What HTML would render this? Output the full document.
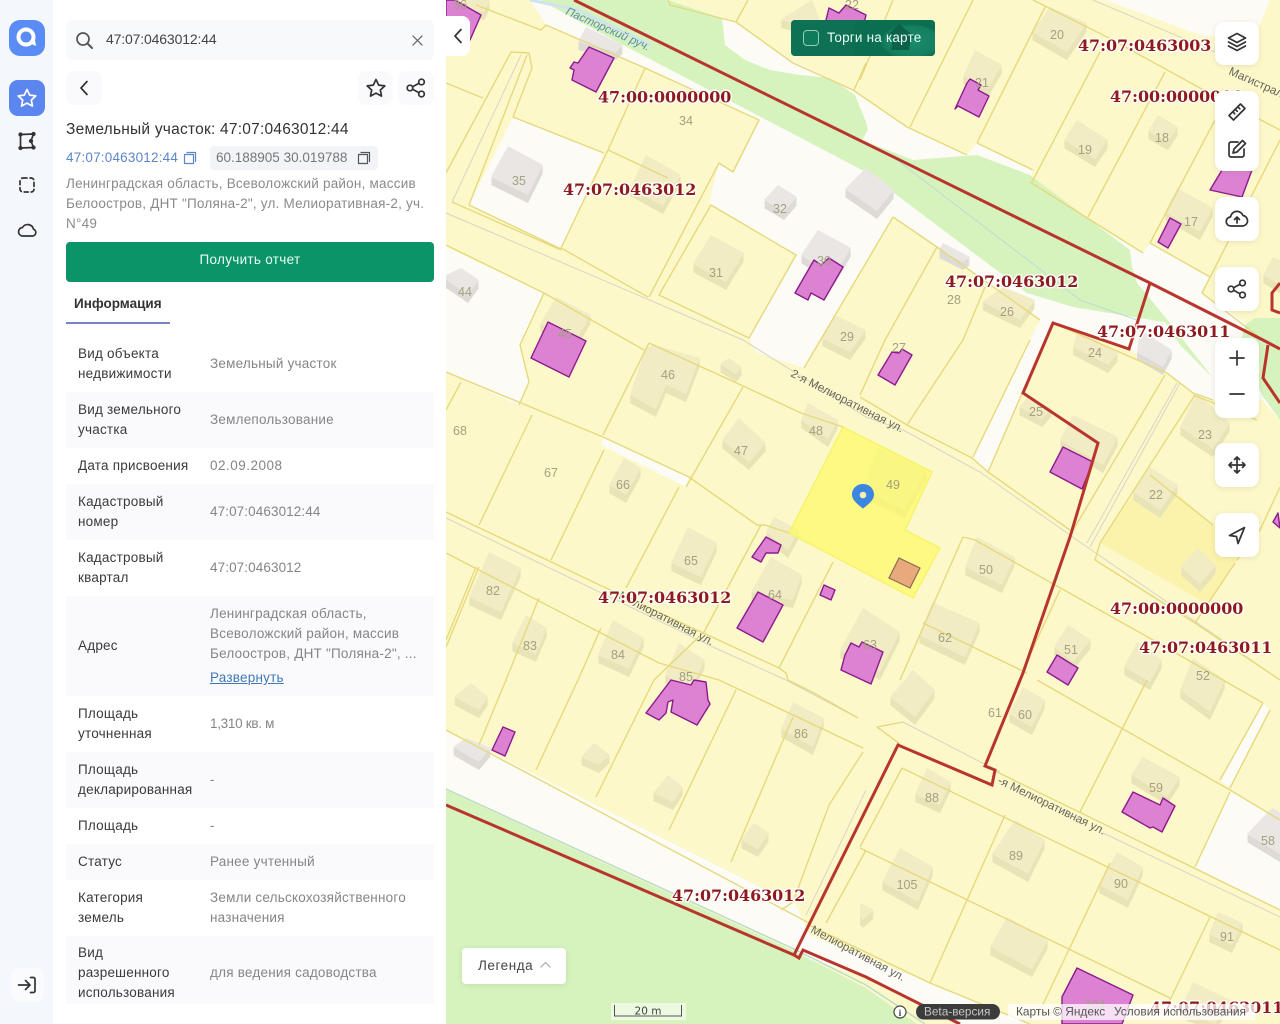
<!DOCTYPE html>
<html lang="ru"><head><meta charset="utf-8"><title>Земельный участок</title>
<style>
*{box-sizing:border-box}
html,body{margin:0;padding:0;width:1280px;height:1024px;overflow:hidden;background:#fff;font-family:"Liberation Sans","DejaVu Sans",sans-serif}
.a{position:absolute}
#map{position:absolute;left:0;top:0}
#nav{left:0;top:0;width:53px;height:1024px;background:#f4f8fc}
#panel{left:54px;top:0;width:392px;height:1024px;background:#fff}
.row{position:absolute;left:66px;width:368px;font-size:13.5px;line-height:20px;letter-spacing:.22px}
.row.alt{background:#fafafd}
.lb{position:absolute;left:12px;top:50%;transform:translateY(-50%);color:#3a3a3a;width:125px;white-space:nowrap}
.vl{position:absolute;left:144px;top:50%;transform:translateY(-50%);color:#858585;width:220px;white-space:nowrap}
.btn{position:absolute;background:#fff;border-radius:9px;box-shadow:0 1px 6px rgba(90,90,60,.14)}
.ic{position:absolute;fill:none;stroke:#333;stroke-width:1.7;stroke-linecap:round;stroke-linejoin:round}
.sq{position:absolute;background:#fafafc;border-radius:8px}
.t{font-family:"DejaVu Serif","Liberation Serif",serif;font-weight:bold;font-size:15.9px;fill:#8e1a1f;paint-order:stroke;stroke:#fff;stroke-opacity:.85;stroke-width:3px;stroke-linejoin:round}
.n{font-family:"Liberation Sans",sans-serif;font-size:12.5px;fill:#a3a17f;text-anchor:middle}
.s{font-family:"Liberation Sans",sans-serif;font-size:11.7px;fill:#66665c}
</style></head><body>
<svg id="map" width="1280" height="1024" viewBox="0 0 1280 1024">
<defs>
<g id="by">
<polygon points="646,155 681,175 663,206 630,188"/><polygon points="711,235 744,253 726,282 693,264"/><polygon points="556,297 591,315 575,342 540,324"/><polygon points="835,315 866,330 850,352 822,338"/><polygon points="1050,7 1087,23 1067,52 1032,32"/><polygon points="1077,120 1108,140 1095,159 1064,140"/><polygon points="1158,115 1178,127 1168,142 1148,131"/><polygon points="975,50 1002,65 988,89 963,76"/><polygon points="1177,188 1213,208 1200,232 1165,212"/><polygon points="1003,287 1035,300 1020,320 982,302"/><polygon points="655,345 700,358 686,394 666,385 656,409 630,395 646,347"/><polygon points="729,358 742,367 736,374 720,364"/><polygon points="739,418 766,443 749,462 722,440"/><polygon points="808,403 838,420 828,439 801,420"/><polygon points="624,458 641,468 626,495 609,485"/><polygon points="688,527 717,543 701,577 671,563"/><polygon points="771,557 802,575 793,600 751,592"/><polygon points="489,552 521,568 501,612 469,597"/><polygon points="526,615 547,628 536,654 512,643"/><polygon points="613,620 644,638 629,669 598,655"/><polygon points="679,643 705,660 690,690 665,675"/><polygon points="774,517 799,530 788,550 766,532"/><polygon points="863,608 900,632 880,672 840,650"/><polygon points="932,602 980,623 965,657 919,635"/><polygon points="977,537 1015,557 1002,585 965,567"/><polygon points="877,447 927,470 905,510 863,490"/><polygon points="1028,397 1052,408 1042,419 1019,407"/><polygon points="1078,330 1118,353 1108,365 1073,347"/><polygon points="1073,415 1118,437 1103,465 1060,440"/><polygon points="1197,393 1230,423 1213,449 1180,427"/><polygon points="1150,467 1178,485 1160,510 1133,492"/><polygon points="1197,548 1216,565 1200,584 1181,567"/><polygon points="1068,625 1091,640 1073,662 1054,647"/><polygon points="1193,658 1225,680 1210,712 1180,690"/><polygon points="1137,642 1162,660 1150,682 1124,667"/><polygon points="1023,687 1045,700 1032,727 1009,714"/><polygon points="793,702 824,718 813,747 781,729"/><polygon points="454,697 471,683 488,697 479,710"/><polygon points="581,757 594,743 610,755 599,765"/><polygon points="653,793 668,775 683,787 673,802"/><polygon points="741,840 754,823 769,833 758,849"/><polygon points="927,768 951,782 940,805 915,794"/><polygon points="1015,820 1045,840 1028,874 992,854"/><polygon points="900,848 933,867 918,902 882,882"/><polygon points="1117,852 1143,867 1128,900 1099,885"/><polygon points="1218,912 1243,923 1232,945 1209,934"/><polygon points="1007,917 1048,940 1032,969 990,947"/><polygon points="860,903 874,910 863,920 860,917"/><polygon points="1143,757 1180,777 1167,797 1131,775"/><polygon points="913,670 935,690 915,717 890,697"/><polygon points="1193,982 1230,1000 1215,1024 1180,1010"/><polygon points="465,0 490,0 484,12 470,10"/><polygon points="780,20 812,0 820,20 803,25"/><polygon points="1273,257 1280,260 1280,285 1263,275"/>
</g>
<g id="bg">
<polygon points="508,146 543,165 528,195 491,177"/><polygon points="586,27 623,45 616,52 578,42"/><polygon points="778,185 797,197 784,212 764,200"/><polygon points="818,230 851,248 834,277 801,255"/><polygon points="866,168 894,190 877,211 845,189"/><polygon points="461,268 479,280 468,295 446,280 446,275"/><polygon points="943,243 970,257 963,262 939,250"/><polygon points="1140,330 1172,350 1163,367 1137,352"/><polygon points="1272,808 1280,812 1280,854 1247,834"/><polygon points="466,738 491,748 479,762 453,747"/>
</g>
<radialGradient id="gl" cx="0.62" cy="0.6" r="0.5"><stop offset="0" stop-color="#1b8b6c"/><stop offset="0.85" stop-color="#157e60"/><stop offset="1" stop-color="#0b6e50"/></radialGradient>
</defs>
<rect x="446" width="834" height="1024" fill="#fdf8ca"/>
<!-- white areas -->
<g fill="#fcfbf6">
<polygon points="530,0 668,0 736,22 791,60 853,90 907,127 967,155 977,143 1033,170 1030,182 1143,253 1150,243 1210,277 1202,293 1267,337 1280,345 1280,420 1262,400 1213,400 1193,393 1167,373 1130,350 1053,323 1043,345 988,472 973,457 1030,340 1040,320 937,247 893,217 804,368 756,352 749,338 796,255 709,203 719,163 733,172 759,120 645,68 546,25"/>
<polygon points="469,205 513,117 604,153 561,250"/>
<polygon points="446,247 544,293 520,345 529,382 519,405 446,372"/>
<polygon points="603,437 689,477 686,487 601,445"/>
<polygon points="446,730 796,905 810,935 930,983 1030,1024 960,1024 860,975 800,957 796,950 446,788"/>
<polygon points="1232,790 1195,867 1280,910 1280,820"/>
<polygon points="1263,703 1270,710 1230,788 1220,780"/>
<polygon points="1105,0 1270,0 1253,40 1200,35"/>
</g>
<polygon points="1100,543 1150,470 1213,525 1260,530 1237,560 1207,604" fill="#fbf3ab"/>
<!-- green -->
<g fill="#d6f3bd">
<polygon points="540,0 668,0 722,18 725,45 745,60 770,70 800,75 830,78 855,95 866,122 868,130 862,140 913,160 977,155 1030,175 1130,250 1132,267 1137,283 1170,323 1073,307 1027,293 866,172 623,45"/>
<polygon points="1177,340 1150,300 1137,283 1170,323 1213,378 1180,345"/>
<polygon points="1245,325 1255,318 1280,318 1280,420 1262,395 1240,345"/>
<polygon points="446,790 796,952 866,988 917,1024 446,1024"/>
</g>
<polyline points="893,157 1037,267 1080,300 1137,320" fill="none" stroke="#bcdcd4" stroke-width="1"/>
<polyline points="446,789 796,950 866,985 925,1024" fill="none" stroke="#b9dccb" stroke-width="1.5"/>
<polyline points="530,0 578,10 650,45" fill="none" stroke="#cfe3ee" stroke-width="3"/>
<!-- buildings -->
<g fill="#e9e3b8"><use href="#by" y="2"/><use href="#by" y="4"/><use href="#by" y="6"/><use href="#by" y="8"/></g>
<use href="#by" fill="#f1ecc4"/>
<g fill="#dedbd7"><use href="#bg" y="2"/><use href="#bg" y="4"/><use href="#bg" y="6"/><use href="#bg" y="8"/></g>
<use href="#bg" fill="#e9e6e3"/>
<!-- selected -->
<polygon points="843,427 932,472 905,530 940,548 913,598 789,533" fill="#fdfa68" fill-opacity=".72" stroke="#f7f36c" stroke-width="1.5"/>
<!-- thin roads -->
<g fill="none" stroke="#d8d5c4" stroke-width="1">
<polyline points="446,213 743,340 866,417 903,430 980,472 1077,540 1193,620 1280,680"/>
<polyline points="446,518 616,600 713,647 786,680 858,718"/>
<polyline points="1177,383 1087,543"/><polyline points="1180,383 1090,547"/>
<polyline points="866,790 806,915"/>
<polyline points="1103,833 1280,917"/>
<polyline points="1093,0 1227,57"/><polyline points="903,722 1000,772"/>
<polyline points="521,55 452,202"/>
</g>
<!-- yellow lines -->
<g fill="none" stroke="#e6d97c" stroke-width="1.4" stroke-linejoin="round">
<polyline points="476,5 541,30 546,25 645,68 759,120 733,172 719,163 649,297"/>
<polyline points="511,52 529,53 532,68 513,117 604,153"/>
<polyline points="645,68 608,150 561,248 648,297"/>
<polyline points="608,150 668,178"/><polyline points="446,83 483,98"/>
<polyline points="511,52 446,173"/><polyline points="527,55 469,205 561,249"/><polyline points="452,202 561,250"/>
<polygon points="711,205 796,255 749,338 659,295"/>
<polyline points="446,245 544,293 644,350"/>
<polyline points="544,293 520,345 529,382 519,405"/>
<polyline points="649,343 741,385 801,413 843,427"/>
<polyline points="649,343 603,435"/>
<polyline points="446,372 603,437 689,477 757,525 765,525 789,533"/>
<polyline points="743,387 686,487"/>
<polyline points="532,415 479,525"/><polyline points="604,450 551,560"/><polyline points="679,487 626,588"/><polyline points="461,382 446,410"/>
<polyline points="446,512 606,588 779,668 786,673 788,680 814,693 858,718"/>
<polyline points="446,553 659,663 719,680 863,748"/>
<polyline points="761,525 704,632"/><polyline points="833,562 779,668"/>
<polyline points="539,598 506,680 479,745"/><polyline points="601,628 578,680 536,770"/>
<polyline points="479,567 446,647"/><polyline points="476,567 446,640"/>
<polyline points="654,680 596,797"/><polyline points="704,632 654,680"/><polyline points="736,690 669,830"/><polyline points="793,717 731,862"/>
<polyline points="863,752 829,805 793,902 781,910"/>
<polyline points="446,730 809,923"/>
<polyline points="866,850 826,923"/>
<polyline points="937,247 885,340 860,395"/><polyline points="893,217 804,368"/>
<polyline points="937,247 1040,320"/><polyline points="893,217 937,247"/>
<polyline points="985,287 963,340 907,425"/>
<polyline points="860,397 907,425 972,458 988,472 1070,530"/>
<polyline points="988,472 1043,345"/><polyline points="973,457 1030,340"/>
<polyline points="1165,375 1072,532"/>
<polyline points="1053,323 1167,373 1193,393 1213,400"/>
<polyline points="1195,395 1100,543 1095,560 1195,623 1235,563"/>
<polyline points="1150,475 1213,525"/>
<polyline points="1280,487 1260,530 1237,560"/><polyline points="1193,395 1257,420"/>
<polyline points="963,537 900,680"/>
<polyline points="963,537 975,540 1153,640 1223,680 1263,703"/>
<polyline points="1060,590 1023,670"/><polyline points="923,623 1027,673"/>
<polyline points="1195,623 1280,680"/>
<polyline points="1037,680 1230,790 1280,820"/><polyline points="1147,680 1080,812"/>
<polyline points="1230,792 1195,867"/><polyline points="1263,703 1220,780"/><polyline points="1270,710 1230,788"/>
<polyline points="993,770 1280,910"/>
<polyline points="903,722 877,727 900,744"/>
<polyline points="902,768 1280,950"/><polyline points="902,768 860,847"/>
<polyline points="860,848 1170,998"/>
<polyline points="1005,815 930,983"/><polyline points="1110,863 1037,1017"/><polyline points="1210,917 1170,1000"/>
<polyline points="809,925 930,983 1030,1024"/>
<polyline points="973,0 910,127"/><polyline points="893,0 860,80"/><polyline points="1045,7 977,143"/>
<polyline points="1033,0 1107,37 1200,88 1280,130"/>
<polyline points="1100,52 1032,182"/><polyline points="1165,72 1088,217"/><polyline points="1215,120 1150,243"/><polyline points="1280,140 1202,293"/>
<polyline points="1030,182 1143,253"/><polyline points="1150,243 1210,277"/><polyline points="1202,293 1263,340"/>
<polyline points="668,0 670,5 736,22 793,63 853,90 907,127 967,155"/><polyline points="977,143 1033,170"/><polyline points="736,22 748,0"/><polyline points="854,90 866,63"/>
</g>
<!-- pink -->
<g fill="#dd82d2" stroke="#8c1a8c" stroke-width="1.4" stroke-linejoin="round">
<polygon points="446,0 455,0 481,15 470,40 446,40"/>
<polygon points="589,47 614,58 596,92 572,80 574,70 570,68 574,62 578,63"/>
<polygon points="826,20 829,8 839,13 846,5 866,15 860,40 830,30"/>
<polygon points="970,79 981,85 978,90 989,96 979,117 958,106 955,109 967,83"/>
<polygon points="814,260 821,265 829,258 843,267 824,300 811,293 808,300 795,293"/>
<polygon points="548,322 586,341 569,377 531,358"/>
<polygon points="892,352 899,353 902,349 912,355 895,385 878,375"/>
<polygon points="1063,447 1093,462 1082,489 1050,472"/>
<polygon points="1225,165 1252,170 1242,197 1210,190"/>
<polygon points="1170,218 1181,224 1168,248 1158,242"/>
<polygon points="766,537 781,545 778,553 766,553 761,562 752,557"/>
<polygon points="824,585 835,590 831,600 820,595"/>
<polygon points="758,592 783,605 763,642 737,628"/>
<polygon points="851,643 859,647 862,642 883,652 871,684 841,670 845,655"/>
<polygon points="671,680 691,685 694,680 706,682 708,700 710,704 697,725 671,712 673,700 668,702 666,713 659,720 646,713"/>
<polygon points="503,727 515,732 505,756 492,750"/>
<polygon points="1057,655 1078,668 1068,685 1047,672"/>
<polygon points="1133,792 1160,805 1163,798 1175,806 1162,832 1153,827 1150,828 1122,812"/>
<polygon points="1077,968 1133,995 1122,1024 1062,1024 1062,997"/>
<polygon points="1278,513 1273,522 1280,528"/>
</g>
<polygon points="899,558 920,568 910,588 889,578" fill="#e8a97c" stroke="#8a6a50" stroke-width="1.2"/>
<!-- red -->
<g fill="none" stroke="#b8352e" stroke-width="3" stroke-linejoin="miter">
<polyline points="574,0 1150,283 1263,340 1280,349"/>
<polyline points="1150,283 1129,349 1053,323 1023,393 1098,443 1070,537 1023,673 985,766 995,770 992,785 898,745 794,955 799,958 803,950 866,977 960,1024"/>
<polyline points="446,805 794,955"/>
<polyline points="1280,283 1272,293 1272,310 1280,313"/>
<polyline points="1268,345 1263,378 1280,403"/>
</g>
<!-- numbers -->
<g class="n">
<text x="460" y="9">36</text><text x="852" y="9">22</text><text x="686" y="125">34</text><text x="519" y="185">35</text><text x="780" y="213">32</text><text x="824" y="265">30</text><text x="716" y="277">31</text><text x="465" y="296">44</text><text x="565" y="338">45</text><text x="847" y="341">29</text><text x="1057" y="39">20</text><text x="982" y="87">21</text><text x="1085" y="154">19</text><text x="1162" y="142">18</text><text x="1191" y="226">17</text><text x="954" y="304">28</text><text x="1007" y="316">26</text><text x="1095" y="357">24</text><text x="899" y="352">27</text><text x="1036" y="416">25</text><text x="668" y="379">46</text><text x="816" y="435">48</text><text x="741" y="455">47</text><text x="460" y="435">68</text><text x="551" y="477">67</text><text x="623" y="489">66</text><text x="691" y="565">65</text><text x="775" y="599">64</text><text x="493" y="595">82</text><text x="530" y="650">83</text><text x="618" y="659">84</text><text x="686" y="681">85</text><text x="801" y="738">86</text><text x="893" y="489">49</text><text x="986" y="574">50</text><text x="945" y="642">62</text><text x="870" y="649">63</text><text x="1205" y="439">23</text><text x="1156" y="499">22</text><text x="1071" y="654">51</text><text x="1203" y="680">52</text><text x="1025" y="719">60</text><text x="995" y="717">61</text><text x="1156" y="792">59</text><text x="1268" y="845">58</text><text x="932" y="802">88</text><text x="1016" y="860">89</text><text x="907" y="889">105</text><text x="1121" y="888">90</text><text x="1227" y="941">91</text><text x="1095" y="1009">104</text>
</g>
<!-- street names -->
<text class="s" transform="translate(565,14) rotate(24)" style="font-style:italic;fill:#5d8cab;font-size:11.5px">Пасторский руч.</text>
<text class="s" transform="translate(790,376) rotate(27)">2-я Мелиоративная ул.</text>
<text class="s" transform="translate(618,598) rotate(27)">Мелиоративная ул.</text>
<text class="s" transform="translate(997,783) rotate(26)">-я Мелиоративная ул.</text>
<text class="s" transform="translate(810,932) rotate(28)">Мелиоративная ул.</text>
<text class="s" transform="translate(1228,74) rotate(24)">Магистральная</text>
<!-- cadastral labels -->
<text class="t" x="598" y="102.5">47:00:0000000</text>
<text class="t" x="563" y="195">47:07:0463012</text>
<text class="t" x="1078" y="51">47:07:0463003</text>
<text class="t" x="1110" y="102">47:00:0000000</text>
<text class="t" x="945" y="287">47:07:0463012</text>
<text class="t" x="1097" y="337">47:07:0463011</text>
<text class="t" x="598" y="603">47:07:0463012</text>
<text class="t" x="1110" y="614">47:00:0000000</text>
<text class="t" x="1139" y="653">47:07:0463011</text>
<text class="t" x="672" y="901">47:07:0463012</text>
<text class="t" x="1150" y="1013">47:07:0463011</text>
<!-- pin -->
<path d="M863 484c-6.500 0-11 4.800-11 10.600 0 6 6.500 10 11 14 4.500-4 11-8 11-14 0-5.800-4.500-10.600-11-10.600z" fill="#3c85e0"/>
<circle cx="863" cy="495" r="3.300" fill="#f3efb0"/>
<!-- scale -->
<rect x="611" y="1003" width="75" height="17" fill="#fff" fill-opacity=".55"/>
<path d="M614.500 1005v11h67v-11" fill="none" stroke="#555" stroke-width="1"/>
<text x="648" y="1014.500" font-size="10.500" fill="#444" text-anchor="middle" font-family="DejaVu Sans,sans-serif">20 m</text>
<!-- attribution -->
<circle cx="900" cy="1012" r="6" fill="#fff" stroke="#444" stroke-width="1.200"/>
<text x="900" y="1016" font-size="9.500" font-weight="bold" fill="#444" text-anchor="middle" font-family="Liberation Serif,serif">i</text>
<rect x="916" y="1004" width="84" height="15.500" rx="7.700" fill="#3c3c3c"/>
<text x="924" y="1015.500" font-size="11.800" fill="#c8c8c8">Beta-версия</text>
<rect x="1008" y="1004" width="247" height="16" fill="#fff" fill-opacity=".75"/>
<text x="1016" y="1015.500" font-size="11.900" fill="#555">Карты © Яндекс</text>
<text x="1114" y="1015.500" font-size="11.900" fill="#555">Условия использования</text>
</svg>

<div class="a" id="nav"></div>
<div class="a" id="panel"></div>
<!-- nav -->
<svg class="a" style="left:9px;top:20px" width="36" height="36" viewBox="0 0 36 36"><rect width="36" height="36" rx="11" fill="#5b8cf5"/><circle cx="17" cy="17" r="7.500" fill="none" stroke="#fff" stroke-width="4"/><path d="M21 23.500l6 2.500-1.500-9z" fill="#fff"/></svg>
<div class="a" style="left:9px;top:80px;width:36px;height:36px;border-radius:9px;background:#5b86f0"></div>
<svg class="ic" style="left:15px;top:86px;stroke:#fff" width="24" height="24" viewBox="0 0 24 24"><path d="M12 3.500l2.700 5.600 6.100.8-4.500 4.200 1.200 6-5.500-3-5.500 3 1.200-6-4.500-4.200 6.100-.8z"/></svg>
<svg class="ic" style="left:16px;top:130px" width="22" height="22" viewBox="0 0 22 22"><path d="M4.500 4.500l13-.5-2.500 7 2.500 6.500-13 .5z"/><circle cx="4.500" cy="4.500" r="1.300" fill="#333"/><circle cx="17.500" cy="4" r="1.300" fill="#333"/><circle cx="15" cy="11" r="1.300" fill="#333"/><circle cx="17.500" cy="17.500" r="1.300" fill="#333"/><circle cx="4.500" cy="18" r="1.300" fill="#333"/></svg>
<svg class="ic" style="left:17px;top:175px" width="20" height="20" viewBox="0 0 20 20"><rect x="3" y="3" width="14" height="14" rx="3" stroke-dasharray="4 3"/></svg>
<svg class="ic" style="left:16px;top:219px" width="22" height="22" viewBox="0 0 22 22"><path d="M6 17h10.500a3.500 3.500 0 0 0 1-6.800A6 6 0 0 0 6.500 8.500 4.300 4.300 0 0 0 6 17z"/></svg>
<div class="a" style="left:11px;top:968px;width:33px;height:34px;background:#f9fbfd;border-radius:8px"></div>
<svg class="ic" style="left:16px;top:974px" width="22" height="22" viewBox="0 0 22 22"><path d="M2.500 11H14M9.500 6.500L14 11l-4.500 4.500M14.500 3.500h3a1.500 1.500 0 0 1 1.500 1.500v12a1.500 1.500 0 0 1-1.500 1.500h-3"/></svg>
<!-- search -->
<div class="a" style="left:66px;top:20px;width:368px;height:40px;background:#f8f9fb;border-radius:6px"></div>
<svg class="ic" style="left:74px;top:30px;stroke:#555" width="20" height="20" viewBox="0 0 20 20"><circle cx="9" cy="9" r="6"/><path d="M13.500 13.500L18 18" stroke-width="2"/></svg>
<div class="a" style="left:106px;top:30px;font-size:14px;line-height:18px;color:#444;letter-spacing:-.15px">47:07:0463012:44</div>
<svg class="ic" style="left:412px;top:35px;stroke:#666;stroke-width:1.300" width="11" height="11" viewBox="0 0 12 12"><path d="M1 1l10 10M11 1L1 11"/></svg>
<!-- toolbar -->
<div class="sq" style="left:66px;top:71px;width:36px;height:34px"></div>
<svg class="ic" style="left:76px;top:79px" width="16" height="18" viewBox="0 0 16 18"><path d="M11 2.500L5 9l6 6.500"/></svg>
<div class="sq" style="left:358px;top:71px;width:35px;height:34px"></div>
<svg class="ic" style="left:364px;top:76px" width="24" height="24" viewBox="0 0 24 24"><path d="M12 3.500l2.700 5.600 6.100.8-4.500 4.200 1.200 6-5.500-3-5.500 3 1.200-6-4.500-4.200 6.100-.8z"/></svg>
<div class="sq" style="left:398px;top:71px;width:36px;height:34px"></div>
<svg class="ic" style="left:405px;top:77px" width="22" height="22" viewBox="0 0 22 22"><circle cx="16.500" cy="5" r="2.800"/><circle cx="5" cy="11" r="2.800"/><circle cx="16.500" cy="17" r="2.800"/><path d="M7.600 9.700l6.400-3.400M7.600 12.300l6.400 3.400"/></svg>
<!-- heading -->
<div class="a" style="left:66px;top:120px;font-size:15.500px;line-height:20px;color:#333;white-space:nowrap;letter-spacing:.23px">Земельный участок: 47:07:0463012:44</div>
<div class="a" style="left:66px;top:149px;font-size:13.500px;line-height:17px;color:#5b86c9;white-space:nowrap;letter-spacing:.2px">47:07:0463012:44</div>
<svg class="ic" style="left:183px;top:151px;stroke:#5b86c9;stroke-width:1.200" width="14" height="14" viewBox="0 0 14 14"><rect x="1.500" y="3.500" width="9" height="9"/><path d="M4 1.500h8.500v9"/></svg>
<div class="a" style="left:210px;top:146px;width:168px;height:24px;background:#f3f4f8;border-radius:4px"></div>
<div class="a" style="left:216px;top:149px;font-size:13.500px;line-height:17px;color:#777;white-space:nowrap">60.188905 30.019788</div>
<svg class="ic" style="left:357px;top:151px;stroke:#555;stroke-width:1.200" width="14" height="14" viewBox="0 0 14 14"><rect x="1.500" y="3.500" width="9" height="9"/><path d="M4 1.500h8.500v9"/></svg>
<div class="a" style="left:66px;top:174px;width:368px;font-size:13.500px;line-height:20px;color:#8a8a8a;letter-spacing:.22px;white-space:nowrap">Ленинградская область, Всеволожский район, массив<br>Белоостров, ДНТ "Поляна-2", ул. Мелиоративная-2, уч.<br>N°49</div>
<div class="a" style="left:66px;top:242px;width:368px;height:40px;background:#0a9467;border-radius:4px;color:#eafff5;font-size:13.500px;text-align:center;line-height:35px;letter-spacing:.3px">Получить отчет</div>
<div class="a" style="left:74px;top:295px;font-size:13.500px;line-height:17px;font-weight:bold;color:#333">Информация</div>
<div class="a" style="left:66px;top:322px;width:104px;height:2px;background:#7486c4"></div>
<!-- table -->
<div class="row" style="top:336px;height:56px"><div class="lb">Вид объекта<br>недвижимости</div><div class="vl">Земельный участок</div></div>
<div class="row alt" style="top:392px;height:56px"><div class="lb">Вид земельного<br>участка</div><div class="vl">Землепользование</div></div>
<div class="row" style="top:448px;height:36px"><div class="lb">Дата присвоения</div><div class="vl" style="letter-spacing:.5px">02.09.2008</div></div>
<div class="row alt" style="top:484px;height:56px"><div class="lb">Кадастровый<br>номер</div><div class="vl" style="letter-spacing:.1px">47:07:0463012:44</div></div>
<div class="row" style="top:540px;height:56px"><div class="lb">Кадастровый<br>квартал</div><div class="vl" style="letter-spacing:.1px">47:07:0463012</div></div>
<div class="row alt" style="top:596px;height:100px"><div class="lb">Адрес</div><div class="vl" style="top:calc(50% + 2px)">Ленинградская область,<br>Всеволожский район, массив<br>Белоостров, ДНТ "Поляна-2", ...<br><span style="color:#3f78b8;text-decoration:underline;line-height:28px">Развернуть</span></div></div>
<div class="row" style="top:696px;height:56px"><div class="lb">Площадь<br>уточненная</div><div class="vl" style="letter-spacing:-.3px">1,310 кв. м</div></div>
<div class="row alt" style="top:752px;height:56px"><div class="lb">Площадь<br>декларированная</div><div class="vl">-</div></div>
<div class="row" style="top:808px;height:36px"><div class="lb">Площадь</div><div class="vl">-</div></div>
<div class="row alt" style="top:844px;height:36px"><div class="lb">Статус</div><div class="vl">Ранее учтенный</div></div>
<div class="row" style="top:880px;height:56px"><div class="lb">Категория<br>земель</div><div class="vl">Земли сельскохозяйственного<br>назначения</div></div>
<div class="row alt" style="top:936px;height:68px"><div class="lb" style="top:37px">Вид<br>разрешенного<br>использования</div><div class="vl" style="top:37px">для ведения садоводства</div></div>
<!-- collapse -->
<div class="a" style="left:446px;top:16px;width:24px;height:40px;background:#fff;border-radius:0 8px 8px 0"></div>
<svg class="ic" style="left:450px;top:27px" width="16" height="18" viewBox="0 0 16 18"><path d="M11 2.500L5 9l6 6.500"/></svg>
<!-- torgi -->
<svg class="a" style="left:791px;top:20px" width="144" height="36" viewBox="0 0 144 36"><rect width="144" height="36" rx="4" fill="#0b6e50"/><path d="M4 0h62a50 50 0 0 0-2 36H4a4 4 0 0 1-4-4V4a4 4 0 0 1 4-4z" fill="#0e7155"/><path d="M84 0h56a4 4 0 0 1 4 4v28a4 4 0 0 1-4 4H90a34 34 0 0 1-6-36z" fill="url(#gl)"/><polygon points="97,15 108,4 125,18 120,18 118,30 100,30 102,18" fill="#0b6249"/></svg>
<div class="a" style="left:803px;top:30px;width:16px;height:16px;border:1px solid #8fcfb6;border-radius:4px;background:#0f7a5c"></div>
<div class="a" style="left:827px;top:29px;font-size:13.500px;line-height:17px;color:#e8fff6;white-space:nowrap;letter-spacing:.2px">Торги на карте</div>
<!-- right tools -->
<div class="btn" style="left:1215px;top:22px;width:44px;height:43px"></div>
<svg class="ic" style="left:1226px;top:31px" width="22" height="22" viewBox="0 0 22 22"><path d="M11 2.500l8.500 4.500-8.500 4.500L2.500 7zM2.500 11l8.500 4.500 8.500-4.500M2.500 15l8.500 4.500 8.500-4.500"/></svg>
<div class="btn" style="left:1215px;top:91px;width:44px;height:80px"></div>
<svg class="ic" style="left:1226px;top:101px" width="22" height="22" viewBox="0 0 22 22"><path d="M14.500 3l4.500 4.500L7.500 19 3 14.500zM12 6l1.800 1.800M9.500 8.500l1.800 1.800M7 11l1.800 1.800"/></svg>
<svg class="ic" style="left:1226px;top:138px" width="22" height="22" viewBox="0 0 22 22"><path d="M12 4H5a2 2 0 0 0-2 2v11a2 2 0 0 0 2 2h11a2 2 0 0 0 2-2v-6M16.500 2.500l3 3L11 14l-4 1 1-4z"/></svg>
<div class="btn" style="left:1215px;top:197px;width:44px;height:44px"></div>
<svg class="ic" style="left:1225px;top:208px" width="24" height="22" viewBox="0 0 24 22"><path d="M7 18H6a4.500 4.500 0 0 1-.5-9A6.500 6.500 0 0 1 18 7.500a5.300 5.300 0 0 1 0 10.500h-1H7zM12 15V9M9.500 11.500L12 9l2.500 2.500"/></svg>
<div class="btn" style="left:1215px;top:267px;width:44px;height:44px"></div>
<svg class="ic" style="left:1226px;top:278px" width="22" height="22" viewBox="0 0 22 22"><circle cx="16.500" cy="5" r="2.800"/><circle cx="5" cy="11" r="2.800"/><circle cx="16.500" cy="17" r="2.800"/><path d="M7.600 9.700l6.400-3.400M7.600 12.300l6.400 3.400"/></svg>
<div class="btn" style="left:1215px;top:338px;width:44px;height:80px"></div>
<svg class="ic" style="left:1226px;top:347px" width="22" height="22" viewBox="0 0 22 22"><path d="M11 4v14M4 11h14"/></svg>
<svg class="ic" style="left:1226px;top:383px" width="22" height="22" viewBox="0 0 22 22"><path d="M4 11h14"/></svg>
<div class="btn" style="left:1215px;top:443px;width:44px;height:44px"></div>
<svg class="ic" style="left:1226px;top:454px" width="22" height="22" viewBox="0 0 22 22"><path d="M11 3v16M3 11h16M8.500 5.500L11 3l2.500 2.500M8.500 16.500L11 19l2.500-2.500M5.500 8.500L3 11l2.500 2.500M16.500 8.500L19 11l-2.500 2.500"/></svg>
<div class="btn" style="left:1215px;top:513px;width:44px;height:44px"></div>
<svg class="ic" style="left:1226px;top:524px" width="22" height="22" viewBox="0 0 22 22"><path d="M18.500 3.500L3.500 11.500l7 1 1.500 7z"/></svg>
<!-- legend -->
<div class="btn" style="left:462px;top:948px;width:104px;height:36px;border-radius:4px"></div>
<div class="a" style="left:478px;top:957px;font-size:13.500px;line-height:17px;color:#444;letter-spacing:.55px">Легенда</div>
<svg class="ic" style="left:540px;top:961px;stroke:#bbb;stroke-width:1.500" width="11" height="8" viewBox="0 0 11 8"><path d="M1 6l4.500-4.500L10 6"/></svg>
</body></html>
